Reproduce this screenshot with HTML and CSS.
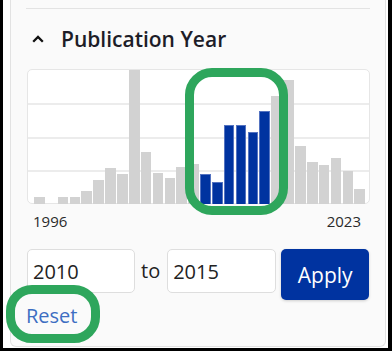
FILE: index.html
```html
<!DOCTYPE html>
<html>
<head>
<meta charset="utf-8">
<link rel="stylesheet" href="styles.css">
</head>
<body>
<div class="frame">
  <section class="panel">
    <div class="divider"></div>
    <h2 class="heading">
      <svg class="chev" width="12" height="8" viewBox="0 0 12 8"><polyline points="1.2,6.8 6,2 10.8,6.8" fill="none" stroke="#111" stroke-width="2.3"/></svg>
      <span>Publication Year</span>
    </h2>
    <div class="chart">
      <div class="bars">
        <div class="bar" style="height:7px"></div>
        <div class="bar" style="height:0px"></div>
        <div class="bar" style="height:7px"></div>
        <div class="bar" style="height:7px"></div>
        <div class="bar" style="height:13px"></div>
        <div class="bar" style="height:24px"></div>
        <div class="bar" style="height:36px"></div>
        <div class="bar" style="height:30px"></div>
        <div class="bar" style="height:134px"></div>
        <div class="bar" style="height:52px"></div>
        <div class="bar" style="height:31px"></div>
        <div class="bar" style="height:26px"></div>
        <div class="bar" style="height:37px"></div>
        <div class="bar" style="height:40px"></div>
        <div class="bar sel" style="height:30px"></div>
        <div class="bar sel" style="height:22px"></div>
        <div class="bar sel" style="height:79px"></div>
        <div class="bar sel" style="height:79px"></div>
        <div class="bar sel" style="height:72px"></div>
        <div class="bar sel" style="height:93px"></div>
        <div class="bar" style="height:108px"></div>
        <div class="bar" style="height:124px"></div>
        <div class="bar" style="height:58px"></div>
        <div class="bar" style="height:42px"></div>
        <div class="bar" style="height:39px"></div>
        <div class="bar" style="height:46px"></div>
        <div class="bar" style="height:33px"></div>
        <div class="bar" style="height:15px"></div>
      </div>
    </div>
    <div class="axis"><span>1996</span><span>2023</span></div>
    <div class="range">
      <input class="year" type="text" value="2010">
      <span class="to">to</span>
      <input class="year year2" type="text" value="2015">
      <button class="apply">Apply</button>
    </div>
    <a class="reset" href="#">Reset</a>
  </section>
  <div class="hl hl-bars"></div>
  <div class="hl hl-reset"></div>
</div>
</body>
</html>
```

FILE: styles.css
```css
html, body {
  margin: 0;
  padding: 0;
  background: #fff;
}
body {
  font-family: "Open Sans", "Noto Sans", sans-serif;
  color: #222;
}
.frame {
  position: relative;
  width: 392px;
  height: 351px;
  box-sizing: border-box;
  border-left: 3px solid #000;
  border-right: 4px solid #000;
  border-bottom: 3px solid #000;
  background: #fff;
  overflow: hidden;
}
.panel {
  box-sizing: border-box;
  margin-left: 7px;
  width: 376px;
  height: 347px;
  background: #fafafa;
  border: 1px solid #e2e2e2;
  border-top: none;
  border-radius: 0 0 6px 6px;
  padding: 0 15px 0 15px;
  display: flex;
  flex-direction: column;
}
.divider {
  margin-top: 8px;
  height: 1px;
  background: #e3e3e3;
}
.heading {
  margin: 16px 0 0 0;
  display: flex;
  align-items: center;
  height: 28px;
  font-size: 21px;
  font-weight: 600;
  line-height: 28px;
  color: #1d1d28;
}
.chev {
  margin-left: 6px;
  margin-right: 17px;
  flex: none;
}
.chart {
  margin: 16px 0 0 1px;
  width: 343px;
  height: 135px;
  box-sizing: border-box;
  border: 1px solid #e6e6e6;
  border-radius: 5px;
  background:
    linear-gradient(#ececec, #ececec) 0 33px / 100% 2px no-repeat,
    linear-gradient(#ececec, #ececec) 0 67px / 100% 2px no-repeat,
    linear-gradient(#ececec, #ececec) 0 100px / 100% 2px no-repeat,
    #fff;
  padding: 0 4px 0 6px;
  display: flex;
}
.bars {
  flex: 1;
  display: grid;
  grid-template-columns: repeat(28, 1fr);
  column-gap: 1.3px;
  align-items: end;
}
.bar {
  background: #d2d2d2;
}
.bar.sel {
  background: #0033a0;
  box-shadow: inset 1px 0 #5473c0, inset -1px 0 #5473c0, inset 0 1px #5473c0;
}
.axis {
  margin-top: 7px;
  display: flex;
  justify-content: space-between;
  padding: 0 9px 0 7px;
  font-size: 15px;
  line-height: 20px;
  color: #2a2a2a;
}
.range {
  margin-top: 18px;
  display: flex;
  align-items: flex-start;
  padding-left: 1px;
}
.year {
  box-sizing: border-box;
  width: 108px;
  height: 44px;
  border: 1px solid #dedede;
  border-radius: 5px;
  background: #fff;
  padding: 0 0 0 5px;
  font-family: "Open Sans", "Noto Sans", sans-serif;
  font-size: 20px;
  color: #222;
  outline: none;
}
.year2 {
  width: 109px;
}
.to {
  font-size: 20px;
  line-height: 44px;
  margin: 0 7px 0 6px;
  color: #222;
}
.apply {
  margin-left: 5px;
  width: 88px;
  height: 51px;
  border: none;
  border-radius: 5px;
  background: #0033a0;
  color: #fff;
  font-family: "Open Sans", "Noto Sans", sans-serif;
  font-size: 21px;
  font-weight: 500;
  box-shadow: 0 1px 3px rgba(0, 0, 0, 0.18);
  padding: 0;
}
.reset {
  margin-top: 2px;
  align-self: flex-start;
  font-size: 20px;
  line-height: 27px;
  color: #3d6ec2;
  text-decoration: none;
}
.hl {
  position: absolute;
  box-sizing: border-box;
  border: 9px solid #2ea65c;
  border-radius: 27px;
}
.hl-bars {
  left: 182px;
  top: 68px;
  width: 103px;
  height: 147px;
}
.hl-reset {
  left: 3px;
  top: 285px;
  width: 94px;
  height: 58px;
  border-radius: 26px;
}
```
